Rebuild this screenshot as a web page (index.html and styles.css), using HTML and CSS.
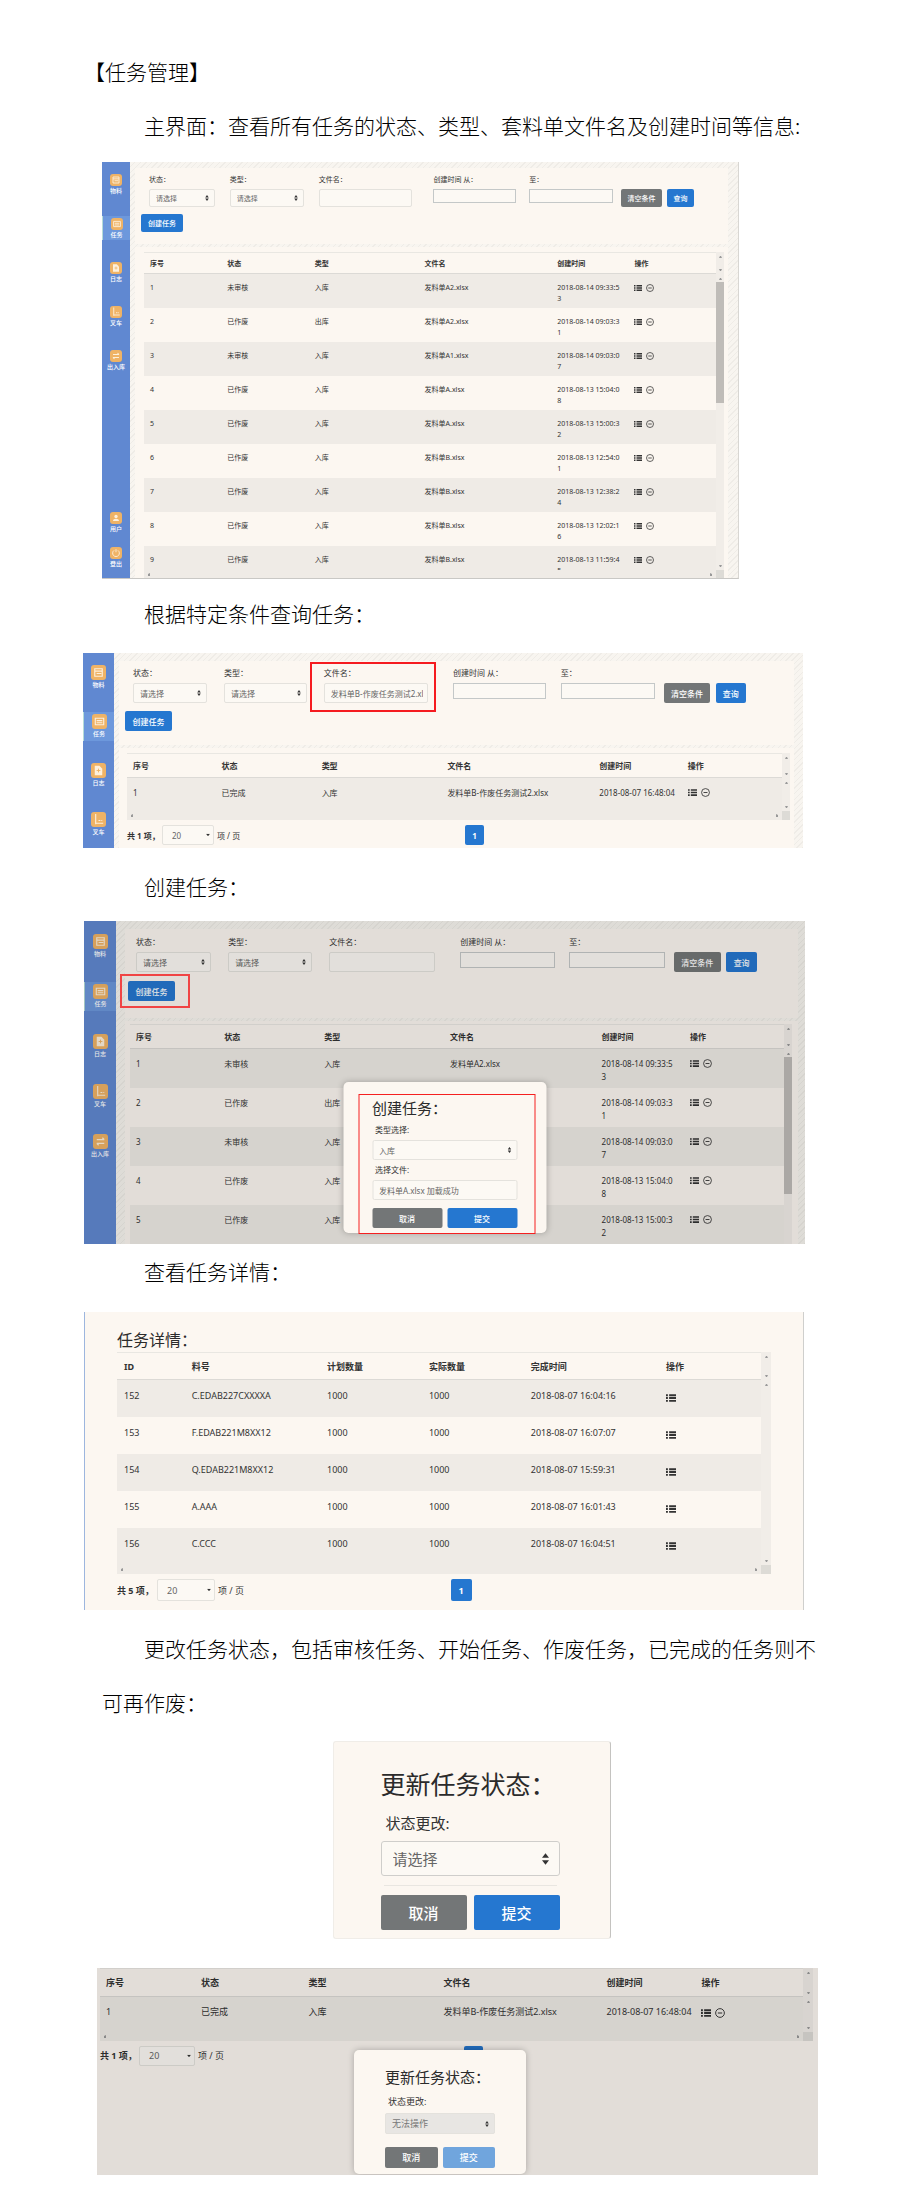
FILE: index.html
```html
<!DOCTYPE html>
<html lang="zh-CN">
<head>
<meta charset="utf-8">
<meta name="viewport" content="width=device-width, initial-scale=1">
<title>任务管理</title>
<link rel="stylesheet" href="styles.css">
</head>
<body>
<svg class="defs" aria-hidden="true">
  <symbol id="i-list" viewBox="0 0 16 12"><path d="M0 0h3v3H0zM5 0h11v3H5zM0 4.5h3v3H0zM5 4.5h11v3H5zM0 9h3v3H0zM5 9h11v3H5z" fill="currentColor"/></symbol>
  <symbol id="i-minus" viewBox="0 0 16 16"><circle cx="8" cy="8" r="7" fill="none" stroke="currentColor" stroke-width="1.5"/><path d="M4.5 8h7" stroke="currentColor" stroke-width="1.6"/></symbol>
  <symbol id="i-sort" viewBox="0 0 6 10"><path d="M0 4l3-4 3 4zM0 6l3 4 3-4z" fill="currentColor"/></symbol>
  <symbol id="i-down" viewBox="0 0 6 4"><path d="M0 0h6L3 4z" fill="currentColor"/></symbol>
  <symbol id="i-material" viewBox="0 0 16 16"><path d="M4 4h8v8H4zM4 6.500h8M6 9h5" fill="none" stroke="currentColor" stroke-width="1.200"/></symbol>
  <symbol id="i-task" viewBox="0 0 16 16"><path d="M3.500 4.500h9v7h-9zM5 7h6M5 9.300h6" fill="none" stroke="currentColor" stroke-width="1.200"/></symbol>
  <symbol id="i-log" viewBox="0 0 16 16"><path d="M4 3h5l3 3v7H4z" fill="currentColor"/><path d="M6 8h4M8 6v4" stroke="#efb366"/></symbol>
  <symbol id="i-fork" viewBox="0 0 16 16"><path d="M5 2v11M5 12h8M8 9h2M11 9h1" fill="none" stroke="currentColor" stroke-width="1.200"/></symbol>
  <symbol id="i-swap" viewBox="0 0 16 16"><path d="M4 6h8M10 4l2 2M12 10H4M6 12l-2-2" fill="none" stroke="currentColor" stroke-width="1.400"/></symbol>
  <symbol id="i-user" viewBox="0 0 16 16"><circle cx="8" cy="6" r="2.200" fill="currentColor"/><path d="M4 12c0-4 8-4 8 0z" fill="currentColor"/></symbol>
  <symbol id="i-exit" viewBox="0 0 16 16"><path d="M5.500 4.500a4.500 4.500 0 1 0 5 0M8 3v4" fill="none" stroke="currentColor" stroke-width="1.200"/></symbol>
</svg>
<article class="doc">
<h1>【任务管理】</h1>
<p>主界面：查看所有任务的状态、类型、套料单文件名及创建时间等信息:</p>

<figure class="shot app shot-main">
  <nav class="side">
    <a href="#"><i><svg><use href="#i-material"/></svg></i>物料</a>
    <a href="#" class="on"><i><svg><use href="#i-task"/></svg></i>任务</a>
    <a href="#"><i><svg><use href="#i-log"/></svg></i>日志</a>
    <a href="#"><i><svg><use href="#i-fork"/></svg></i>叉车</a>
    <a href="#"><i><svg><use href="#i-swap"/></svg></i>出入库</a>
    <a href="#" class="first-low"><i><svg><use href="#i-user"/></svg></i>用户</a>
    <a href="#" class="low"><i><svg><use href="#i-exit"/></svg></i>登出</a>
  </nav>
  <div class="main">
    <section class="panel filter">
      <div class="fields">
        <div class="field"><label for="a1">状态：</label><span class="pick"><select id="a1"><option>请选择</option></select><svg><use href="#i-sort"/></svg></span></div>
        <div class="field"><label for="a2">类型：</label><span class="pick"><select id="a2"><option>请选择</option></select><svg><use href="#i-sort"/></svg></span></div>
        <div class="field"><label for="a3">文件名：</label><input id="a3" type="text"></div>
        <div class="field"><label for="a4">创建时间 从：</label><input id="a4" class="date" type="text"></div>
        <div class="field"><label for="a5">至：</label><input id="a5" class="date" type="text"></div>
        <button class="btn grey">清空条件</button>
        <button class="btn">查询</button>
      </div>
      <button class="btn create">创建任务</button>
    </section>
    <section class="panel data">
      <div class="grid">
        <div class="view">
          <table>
            <colgroup><col class="c1"><col class="c2"><col class="c3"><col class="c4"><col class="c5"><col class="c6"></colgroup>
            <thead><tr><th>序号</th><th>状态</th><th>类型</th><th>文件名</th><th>创建时间</th><th>操作</th></tr></thead>
            <tbody>
              <tr><td>1</td><td>未审核</td><td>入库</td><td>发料单A2.xlsx</td><td class="time">2018-08-14 09:33:53</td><td class="ops"><button aria-label="详情"><svg class="li"><use href="#i-list"/></svg></button><button aria-label="作废"><svg class="mi"><use href="#i-minus"/></svg></button></td></tr>
              <tr><td>2</td><td>已作废</td><td>出库</td><td>发料单A2.xlsx</td><td class="time">2018-08-14 09:03:31</td><td class="ops"><button aria-label="详情"><svg class="li"><use href="#i-list"/></svg></button><button aria-label="作废"><svg class="mi"><use href="#i-minus"/></svg></button></td></tr>
              <tr><td>3</td><td>未审核</td><td>入库</td><td>发料单A1.xlsx</td><td class="time">2018-08-14 09:03:07</td><td class="ops"><button aria-label="详情"><svg class="li"><use href="#i-list"/></svg></button><button aria-label="作废"><svg class="mi"><use href="#i-minus"/></svg></button></td></tr>
              <tr><td>4</td><td>已作废</td><td>入库</td><td>发料单A.xlsx</td><td class="time">2018-08-13 15:04:08</td><td class="ops"><button aria-label="详情"><svg class="li"><use href="#i-list"/></svg></button><button aria-label="作废"><svg class="mi"><use href="#i-minus"/></svg></button></td></tr>
              <tr><td>5</td><td>已作废</td><td>入库</td><td>发料单A.xlsx</td><td class="time">2018-08-13 15:00:32</td><td class="ops"><button aria-label="详情"><svg class="li"><use href="#i-list"/></svg></button><button aria-label="作废"><svg class="mi"><use href="#i-minus"/></svg></button></td></tr>
              <tr><td>6</td><td>已作废</td><td>入库</td><td>发料单B.xlsx</td><td class="time">2018-08-13 12:54:01</td><td class="ops"><button aria-label="详情"><svg class="li"><use href="#i-list"/></svg></button><button aria-label="作废"><svg class="mi"><use href="#i-minus"/></svg></button></td></tr>
              <tr><td>7</td><td>已作废</td><td>入库</td><td>发料单B.xlsx</td><td class="time">2018-08-13 12:38:24</td><td class="ops"><button aria-label="详情"><svg class="li"><use href="#i-list"/></svg></button><button aria-label="作废"><svg class="mi"><use href="#i-minus"/></svg></button></td></tr>
              <tr><td>8</td><td>已作废</td><td>入库</td><td>发料单B.xlsx</td><td class="time">2018-08-13 12:02:16</td><td class="ops"><button aria-label="详情"><svg class="li"><use href="#i-list"/></svg></button><button aria-label="作废"><svg class="mi"><use href="#i-minus"/></svg></button></td></tr>
              <tr><td>9</td><td>已作废</td><td>入库</td><td>发料单B.xlsx</td><td class="time">2018-08-13 11:59:45</td><td class="ops"><button aria-label="详情"><svg class="li"><use href="#i-list"/></svg></button><button aria-label="作废"><svg class="mi"><use href="#i-minus"/></svg></button></td></tr>
            </tbody>
          </table>
        </div>
        <div class="vbar"><div class="vhead"><b></b><b class="dn"></b></div><div class="vbody"><b></b><span class="thumb"></span><b class="dn"></b></div></div>
        <div class="hbar"><b class="lf"></b><b class="rt"></b></div><div class="corner"></div>
      </div>
    </section>
  </div>
</figure>

<h2>根据特定条件查询任务：</h2>

<figure class="shot app shot-query">
  <nav class="side">
    <a href="#"><i><svg><use href="#i-material"/></svg></i>物料</a>
    <a href="#" class="on"><i><svg><use href="#i-task"/></svg></i>任务</a>
    <a href="#"><i><svg><use href="#i-log"/></svg></i>日志</a>
    <a href="#"><i><svg><use href="#i-fork"/></svg></i>叉车</a>
  </nav>
  <div class="main">
    <section class="panel filter">
      <div class="fields">
        <div class="field"><label for="b1">状态：</label><span class="pick"><select id="b1"><option>请选择</option></select><svg><use href="#i-sort"/></svg></span></div>
        <div class="field"><label for="b2">类型：</label><span class="pick"><select id="b2"><option>请选择</option></select><svg><use href="#i-sort"/></svg></span></div>
        <div class="field marked"><label for="b3">文件名：</label><input id="b3" type="text" value="发料单B-作废任务测试2.xlsx"></div>
        <div class="field"><label for="b4">创建时间 从：</label><input id="b4" class="date" type="text"></div>
        <div class="field"><label for="b5">至：</label><input id="b5" class="date" type="text"></div>
        <button class="btn grey">清空条件</button>
        <button class="btn">查询</button>
      </div>
      <button class="btn create">创建任务</button>
    </section>
    <section class="panel data">
      <div class="grid">
        <div class="view">
          <table>
            <colgroup><col class="c1"><col class="c2"><col class="c3"><col class="c4"><col class="c5"><col class="c6"></colgroup>
            <thead><tr><th>序号</th><th>状态</th><th>类型</th><th>文件名</th><th>创建时间</th><th>操作</th></tr></thead>
            <tbody><tr><td>1</td><td>已完成</td><td>入库</td><td>发料单B-作废任务测试2.xlsx</td><td class="time">2018-08-07 16:48:04</td><td class="ops"><button aria-label="详情"><svg class="li"><use href="#i-list"/></svg></button><button aria-label="作废"><svg class="mi"><use href="#i-minus"/></svg></button></td></tr></tbody>
          </table>
        </div>
        <div class="vbar"><div class="vhead"><b></b><b class="dn"></b></div><div class="vbody"><b></b><b class="dn"></b></div></div>
        <div class="hbar"><b class="lf"></b><b class="rt"></b></div><div class="corner"></div>
      </div>
      <div class="pager">
        <div class="count"><strong>共 1 项，</strong><span class="pick size"><select aria-label="每页项数"><option>20</option></select><svg><use href="#i-down"/></svg></span><span>项 / 页</span></div>
        <button class="btn page">1</button>
      </div>
    </section>
  </div>
</figure>

<h2>创建任务：</h2>

<figure class="shot app shot-create">
  <nav class="side">
    <a href="#"><i><svg><use href="#i-material"/></svg></i>物料</a>
    <a href="#" class="on"><i><svg><use href="#i-task"/></svg></i>任务</a>
    <a href="#"><i><svg><use href="#i-log"/></svg></i>日志</a>
    <a href="#"><i><svg><use href="#i-fork"/></svg></i>叉车</a>
    <a href="#"><i><svg><use href="#i-swap"/></svg></i>出入库</a>
  </nav>
  <div class="main">
    <section class="panel filter">
      <div class="fields">
        <div class="field"><label for="c1">状态：</label><span class="pick"><select id="c1"><option>请选择</option></select><svg><use href="#i-sort"/></svg></span></div>
        <div class="field"><label for="c2">类型：</label><span class="pick"><select id="c2"><option>请选择</option></select><svg><use href="#i-sort"/></svg></span></div>
        <div class="field"><label for="c3">文件名：</label><input id="c3" type="text"></div>
        <div class="field"><label for="c4">创建时间 从：</label><input id="c4" class="date" type="text"></div>
        <div class="field"><label for="c5">至：</label><input id="c5" class="date" type="text"></div>
        <button class="btn grey">清空条件</button>
        <button class="btn">查询</button>
      </div>
      <span class="create-wrap"><button class="btn create">创建任务</button></span>
    </section>
    <section class="panel data">
      <div class="grid">
        <div class="view">
          <table>
            <colgroup><col class="c1"><col class="c2"><col class="c3"><col class="c4"><col class="c5"><col class="c6"></colgroup>
            <thead><tr><th>序号</th><th>状态</th><th>类型</th><th>文件名</th><th>创建时间</th><th>操作</th></tr></thead>
            <tbody>
              <tr><td>1</td><td>未审核</td><td>入库</td><td>发料单A2.xlsx</td><td class="time">2018-08-14 09:33:53</td><td class="ops"><button aria-label="详情"><svg class="li"><use href="#i-list"/></svg></button><button aria-label="作废"><svg class="mi"><use href="#i-minus"/></svg></button></td></tr>
              <tr><td>2</td><td>已作废</td><td>出库</td><td></td><td class="time">2018-08-14 09:03:31</td><td class="ops"><button aria-label="详情"><svg class="li"><use href="#i-list"/></svg></button><button aria-label="作废"><svg class="mi"><use href="#i-minus"/></svg></button></td></tr>
              <tr><td>3</td><td>未审核</td><td>入库</td><td></td><td class="time">2018-08-14 09:03:07</td><td class="ops"><button aria-label="详情"><svg class="li"><use href="#i-list"/></svg></button><button aria-label="作废"><svg class="mi"><use href="#i-minus"/></svg></button></td></tr>
              <tr><td>4</td><td>已作废</td><td>入库</td><td></td><td class="time">2018-08-13 15:04:08</td><td class="ops"><button aria-label="详情"><svg class="li"><use href="#i-list"/></svg></button><button aria-label="作废"><svg class="mi"><use href="#i-minus"/></svg></button></td></tr>
              <tr><td>5</td><td>已作废</td><td>入库</td><td></td><td class="time">2018-08-13 15:00:32</td><td class="ops"><button aria-label="详情"><svg class="li"><use href="#i-list"/></svg></button><button aria-label="作废"><svg class="mi"><use href="#i-minus"/></svg></button></td></tr>
            </tbody>
          </table>
        </div>
        <div class="vbar"><div class="vhead"><b></b><b class="dn"></b></div><div class="vbody"><b></b><span class="thumb"></span></div></div>
      </div>
    </section>
  </div>
  <div class="shade"></div>
  <form class="modal modal-create">
    <h3>创建任务：</h3>
    <label for="m1">类型选择:</label>
    <span class="pick"><select id="m1"><option>入库</option></select><svg><use href="#i-sort"/></svg></span>
    <label for="m2">选择文件:</label>
    <input id="m2" type="text" value="发料单A.xlsx 加载成功">
    <div class="acts"><button type="button" class="btn grey">取消</button><button type="button" class="btn">提交</button></div>
    <span class="mark"></span>
  </form>
</figure>

<h2>查看任务详情：</h2>

<figure class="shot shot-detail">
  <h3>任务详情：</h3>
  <div class="grid">
    <div class="view">
      <table>
        <colgroup><col class="d1"><col class="d2"><col class="d3"><col class="d3"><col class="d2"><col class="d3"></colgroup>
        <thead><tr><th>ID</th><th>料号</th><th>计划数量</th><th>实际数量</th><th>完成时间</th><th>操作</th></tr></thead>
        <tbody>
          <tr><td>152</td><td>C.EDAB227CXXXXA</td><td>1000</td><td>1000</td><td class="time">2018-08-07 16:04:16</td><td class="ops"><button aria-label="详情"><svg class="li"><use href="#i-list"/></svg></button></td></tr>
          <tr><td>153</td><td>F.EDAB221M8XX12</td><td>1000</td><td>1000</td><td class="time">2018-08-07 16:07:07</td><td class="ops"><button aria-label="详情"><svg class="li"><use href="#i-list"/></svg></button></td></tr>
          <tr><td>154</td><td>Q.EDAB221M8XX12</td><td>1000</td><td>1000</td><td class="time">2018-08-07 15:59:31</td><td class="ops"><button aria-label="详情"><svg class="li"><use href="#i-list"/></svg></button></td></tr>
          <tr><td>155</td><td>A.AAA</td><td>1000</td><td>1000</td><td class="time">2018-08-07 16:01:43</td><td class="ops"><button aria-label="详情"><svg class="li"><use href="#i-list"/></svg></button></td></tr>
          <tr><td>156</td><td>C.CCC</td><td>1000</td><td>1000</td><td class="time">2018-08-07 16:04:51</td><td class="ops"><button aria-label="详情"><svg class="li"><use href="#i-list"/></svg></button></td></tr>
        </tbody>
      </table>
    </div>
    <div class="vbar"><div class="vhead"><b></b><b class="dn"></b></div><div class="vbody"><b></b><b class="dn"></b></div></div>
    <div class="hbar"><b class="lf"></b><b class="rt"></b></div><div class="corner"></div>
  </div>
  <div class="pager">
    <div class="count"><strong>共 5 项，</strong><span class="pick size"><select aria-label="每页项数"><option>20</option></select><svg><use href="#i-down"/></svg></span><span>项 / 页</span></div>
    <button class="btn page">1</button>
  </div>
</figure>

<p>更改任务状态，包括审核任务、开始任务、作废任务，已完成的任务则不可再作废：</p>

<figure class="shot shot-status">
  <form class="box">
    <h3>更新任务状态：</h3>
    <label for="s1">状态更改:</label>
    <span class="pick"><select id="s1"><option>请选择</option></select><svg><use href="#i-sort"/></svg></span>
    <hr>
    <div class="acts"><button type="button" class="btn grey">取消</button><button type="button" class="btn">提交</button></div>
  </form>
</figure>

<figure class="shot shot-done">
  <div class="grid">
    <div class="view">
      <table>
        <colgroup><col class="c1"><col class="c2"><col class="c3"><col class="c4"><col class="c5"><col class="c6"></colgroup>
        <thead><tr><th>序号</th><th>状态</th><th>类型</th><th>文件名</th><th>创建时间</th><th>操作</th></tr></thead>
        <tbody><tr><td>1</td><td>已完成</td><td>入库</td><td>发料单B-作废任务测试2.xlsx</td><td class="time">2018-08-07 16:48:04</td><td class="ops"><button aria-label="详情"><svg class="li"><use href="#i-list"/></svg></button><button aria-label="作废"><svg class="mi"><use href="#i-minus"/></svg></button></td></tr></tbody>
      </table>
    </div>
    <div class="vbar"><div class="vhead"><b></b><b class="dn"></b></div><div class="vbody"><b></b><b class="dn"></b></div></div>
    <div class="hbar"><b class="lf"></b><b class="rt"></b></div><div class="corner"></div>
  </div>
  <div class="pager">
    <div class="count"><strong>共 1 项，</strong><span class="pick size"><select aria-label="每页项数"><option>20</option></select><svg><use href="#i-down"/></svg></span><span>项 / 页</span></div>
    <button class="btn page" aria-label="第 1 页"></button>
  </div>
  <div class="shade"></div>
  <form class="modal modal-done">
    <h3>更新任务状态：</h3>
    <label for="s2">状态更改:</label>
    <span class="pick"><select id="s2" disabled><option>无法操作</option></select><svg><use href="#i-sort"/></svg></span>
    <div class="acts"><button type="button" class="btn grey">取消</button><button type="button" class="btn" disabled>提交</button></div>
  </form>
</figure>
</article>
</body>
</html>
```

FILE: styles.css
```css
*, *::before, *::after { box-sizing: border-box; }
body { margin: 0; background: #fff; color: #000; font-family: "Noto Sans", "Noto Sans CJK SC", sans-serif; }
.defs { position: absolute; width: 0; height: 0; }
.doc { padding: 44px 84px 35px; }
.doc > h1, .doc > h2, .doc > p {
  margin: 0; font-family: "Noto Sans CJK SC", sans-serif; font-size: 21px; line-height: 54px; font-weight: 300;
}
.doc > h2 { padding-left: 60px; }
.doc > p { padding-left: 18px; text-indent: 42px; }

/* shared figure styles */
.shot {
  --fs: 8px; --lh: 13px; --ctl: 20px; --bar: 8px; --head: 25px; --pb: 12px; --icon: 9px; --ops: 10px;
  position: relative; margin: 0; width: 100%; max-width: 720px; overflow: hidden;
  background: #fcf7f1; color: #333; font-size: var(--fs); line-height: var(--lh);
}
.shot button, .shot input, .shot select { font: inherit; margin: 0; padding: 0; border: 0; min-width: 0; }
.shot h3 { margin: 0; font-weight: 400; font-family: "Noto Sans CJK SC", sans-serif; color: #2b2b2b; white-space: nowrap; }
.shot .btn { height: var(--ctl); background: #2577d0; color: #fff; border-radius: 2px; font-weight: 500; white-space: nowrap; }
.shot .btn.grey { background: #737677; }
.shot .btn:disabled { background: #70a5dd; }
.shot input, .shot select {
  display: block; width: 100%; height: var(--ctl); padding: 0 6px; border: 1px solid #e4e2dd;
  border-radius: 2px; background: #fcf9f4; color: #666; appearance: none;
}
.shot input.date { height: calc(var(--ctl) - 4px); border-color: #c4c8c8; border-radius: 0; }
.pick { position: relative; display: block; }
.pick svg { position: absolute; right: 6px; top: 50%; width: 4px; height: 6px; transform: translateY(-50%); color: #333; pointer-events: none; }

/* application frame */
.app { display: grid; grid-template-columns: var(--side) 1fr; }
.side { display: flex; flex-direction: column; gap: var(--gap); padding: var(--top) 0 9px; background: #6088d1; }
.side a {
  display: flex; flex-direction: column; align-items: center; height: var(--item); padding-top: 2px;
  color: #fff; font-size: 6px; line-height: 10px; font-weight: 500; text-decoration: none; white-space: nowrap;
}
.side a.on { background: #6d98dc; border-left: 1px solid #b5dcd8; }
.side i { display: block; width: var(--tile); height: var(--tile); flex: none; border-radius: 3px; background: #efb366; }
.side svg { display: block; width: 100%; height: 100%; color: #fdf0dc; }
.first-low { margin-top: auto; }
.main {
  display: flex; flex-direction: column; padding: var(--strip) var(--right) 0 var(--left);
  background: repeating-linear-gradient(-45deg, #efece7 0 1px, #f8f5f0 1px 4px);
}
.panel { background: #fcf7f1; }
.filter { padding: var(--ft) var(--fr) var(--fb) var(--fl); margin-bottom: 3px; }
.fields {
  display: grid; align-items: end; margin-bottom: var(--rowgap);
  grid-template-columns: 66fr 15fr 74fr 15fr 93fr 22fr 83fr 13fr 84fr 8fr 41fr 5fr 27fr;
}
.fields > :nth-child(1) { grid-column: 1; }
.fields > :nth-child(2) { grid-column: 3; }
.fields > :nth-child(3) { grid-column: 5; }
.fields > :nth-child(4) { grid-column: 7; }
.fields > :nth-child(5) { grid-column: 9; }
.fields > :nth-child(6) { grid-column: 11; }
.fields > :nth-child(7) { grid-column: 13; }
.field { position: relative; min-width: 0; align-self: start; }
.field label { display: block; margin-bottom: 3px; line-height: var(--lab); white-space: nowrap; }
.shot .create { display: block; width: var(--cw); margin-left: -8px; }
.data { padding: 5px 4px 0 var(--dl); flex: 1; }
.marked::after { content: ""; position: absolute; inset: -4px -8px -9px -14px; border: 2px solid #f51b20; pointer-events: none; }
.shot .marked input { padding-right: 4px; }

/* tables */
.grid { display: grid; grid-template-columns: 1fr var(--bar); }
.view { overflow: hidden; }
table { width: 100%; table-layout: fixed; border-collapse: separate; border-spacing: 0; }
.c1, .c5 { width: 13.5%; }
.c2, .c6 { width: 15.3%; }
.c3 { width: 19.2%; }
.c4 { width: 23.2%; }
.d1 { width: 10.5%; }
.d2 { width: 21%; }
.d3 { width: 15.8%; }
th, td { padding: 0 0 0 6px; text-align: left; white-space: nowrap; vertical-align: top; }
th { height: var(--head); vertical-align: middle; font-weight: 700; border-top: 1px solid #e9e7e2; border-bottom: 1px solid #dcdad6; }
td { padding-top: 8px; padding-bottom: var(--pb); }
tbody tr:nth-child(odd) td { background: #efebe6; }
.shot td.ops { padding-top: var(--ops); padding-bottom: 0; line-height: 0; }
.ops button { background: none; vertical-align: top; margin-right: 4px !important; }
.ops svg { display: block; width: var(--icon); height: var(--icon); color: #333; }
.vbar { display: flex; flex-direction: column; background: #f1ede8; }
.vhead { height: var(--head); }
.vbody { flex: 1; }
.vhead, .vbody { display: flex; flex-direction: column; align-items: center; justify-content: space-between; padding: 4px 0 3px; }
.grid b { display: block; border: 1px solid transparent; border-width: 0 1px 2px; border-bottom-color: #999; width: 3px; height: 2px; }
.grid b.dn { border-width: 2px 1px 0; border-top-color: #999; }
.grid b.lf { border-width: 1px 2px 1px 0; border-right-color: #999; width: 2px; height: 3px; }
.grid b.rt { border-width: 1px 0 1px 2px; border-left-color: #999; width: 2px; height: 3px; }
.thumb { width: 100%; background: #bfbcb8; }
.hbar { display: flex; align-items: center; justify-content: space-between; height: 9px; padding: 0 4px; background: #efebe6; }
.corner { background: #dddbd6; }

/* footers */
.pager { display: grid; grid-template-columns: 51% 1fr; padding-top: 5px; padding-bottom: 1px; }
.count { display: flex; align-items: center; white-space: nowrap; }
.count strong { width: var(--cnt); font-weight: 700; }
.count .pick { width: var(--sz); margin-right: 3px; }
.count select { padding-left: 9px; }
.count .pick svg { width: 4px; height: 3px; right: 4px; }
.page { width: 19px; }
.pager .btn { font-weight: 700; }

/* dialogs */
.shade { position: absolute; inset: 0; background: rgba(0, 0, 0, .1); }
.modal { position: absolute; background: #fcf7f1; border-radius: 5px; box-shadow: 0 0 6px rgba(0, 0, 0, .25); }
.modal label, .box label { display: block; margin-left: 3px; }
.acts { display: grid; grid-template-columns: 1fr 1fr; gap: 5px; }

.shot-main {
  --fs: 7px; --lh: 11px; --ctl: 18px; --head: 22px; --pb: 4px; --icon: 8px;
  --side: 28px; --top: 10px; --gap: 20px; --item: 24px; --tile: 12px;
  --strip: 6px; --right: 10px; --left: 5px; --ft: 6px; --fr: 34px; --fb: 12px; --fl: 14px; --rowgap: 7px; --lab: 12px; --cw: 42px; --dl: 9px;
  max-width: 637px; margin: 10px 0 7px 18px; border-bottom: 1px solid #c9c8c5; border-right: 1px solid #d8d6d2;
}
.shot-main .low { margin-top: -9px; }
.shot-main .view { height: 318px; }
.shot-main .hbar { height: 8px; }
.shot-main .time { white-space: normal; word-break: break-all; padding-right: 7px; }
.shot-main .thumb { height: 121px; margin-bottom: auto; margin-top: 2px; }
.shot-main .date { height: 15px; }

.shot-query {
  --side: 31px; --top: 10px; --gap: 20px; --item: 29px; --tile: 15px;
  --strip: 8px; --right: 9px; --left: 5px; --ft: 5px; --fr: 48px; --fb: 14px; --fl: 14px; --rowgap: 8px; --lab: 14px; --cw: 47px; --dl: 8px;
  --cnt: 35px; --sz: 52px; margin: 13px 0 11px -1px;
}

.shot-create {
  --pb: 5px; --side: 32px; --top: 11px; --gap: 21px; --item: 29px; --tile: 15px;
  --strip: 8px; --right: 7px; --left: 9px; --ft: 6px; --fr: 41px; --fb: 17px; --fl: 11px; --rowgap: 9px; --lab: 14px; --cw: 47px; --dl: 5px;
  max-width: 721px; margin: 8px 0 0;
}
.shot-create .data { padding-top: 3px; padding-right: 6px; }
.shot-create .time { white-space: normal; word-break: break-all; padding-right: 8px; }
.shot-create .thumb { height: 137px; margin-bottom: auto; margin-top: 2px; }
.create-wrap { position: relative; display: block; width: var(--cw); }
.create-wrap::after { content: ""; position: absolute; inset: -7px -7px -7px -16px; border: 2px solid #f04444; z-index: 1; pointer-events: none; }
.modal-create { top: 161px; left: 50%; width: 203px; transform: translateX(-50%); padding: 16px 29px 5px; }
.modal-create h3 { font-size: 15px; line-height: 20px; margin-bottom: 6px; }
.modal-create label { line-height: 12px; margin-bottom: 4px; }
.modal-create .pick { margin-bottom: 4px; }
.modal-create .acts { margin-top: 8px; }
.mark { position: absolute; inset: 12px 11px -1px 15px; border: 1px solid #f52020; pointer-events: none; }

.shot-detail {
  --fs: 9px; --lh: 15px; --ctl: 22px; --bar: 10px; --head: 28px; --pb: 14px; --icon: 10px; --ops: 13px; --cnt: 40px; --sz: 58px;
  margin: 14px 0 11px; padding: 16px 32px 8px; border-left: 1px solid #9db6de; border-right: 1px solid #cfcfcd;
}
.shot-detail h3 { font-size: 16px; line-height: 22px; margin-bottom: 2px; }
.shot-detail .btn.page { width: 21px; }
.shot-detail th, .shot-detail td { padding-left: 7px; }

.shot-status {
  --fs: 15px; --lh: 20px; --ctl: 35px;
  max-width: 278px; margin: 12px auto 29px; left: 20px; border: 1px solid #f0ede8; border-right-color: #c4c3c0; border-radius: 3px;
}
.box { padding: 24px 50px 8px 47px; }
.box h3 { font-size: 25px; line-height: 34px; margin-bottom: 13px; }
.box label { margin-left: 5px; margin-bottom: 8px; }
.shot .box select { padding-left: 11px; border-color: #cfcecb; border-radius: 3px; }
.box .pick svg { width: 7px; height: 12px; right: 11px; }
.box hr { margin: 9px 3px; border: 0; border-top: 1px solid #e9e6e1; }
.box .acts { gap: 7px; }

.shot-done {
  --fs: 9px; --lh: 14px; --bar: 10px; --head: 29px; --icon: 10px; --ops: 11px; --cnt: 39px; --sz: 56px;
  max-width: 721px; margin-left: 13px; padding: 0 5px 108px 3px;
}
.shot-done td { padding-bottom: 13px; }
.modal-done { top: 82px; left: 257px; width: 172px; padding: 17px 31px 6px; --ctl: 21px; }
.modal-done h3 { font-size: 15px; line-height: 20px; margin-bottom: 9px; }
.modal-done label { line-height: 12px; margin-bottom: 5px; }
.modal-done .acts { margin-top: 13px; }
.modal-done select:disabled { background: #e8e6e3; color: #777; opacity: 1; }
```
